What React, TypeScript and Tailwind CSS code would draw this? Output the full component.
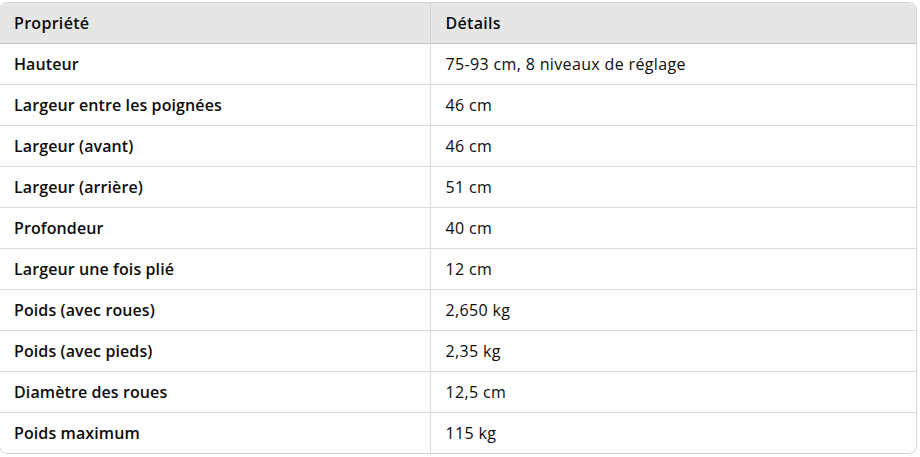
import React from "react";

const rows: [string, string][] = [
  ["Hauteur", "75-93 cm, 8 niveaux de réglage"],
  ["Largeur entre les poignées", "46 cm"],
  ["Largeur (avant)", "46 cm"],
  ["Largeur (arrière)", "51 cm"],
  ["Profondeur", "40 cm"],
  ["Largeur une fois plié", "12 cm"],
  ["Poids (avec roues)", "2,650 kg"],
  ["Poids (avec pieds)", "2,35 kg"],
  ["Diamètre des roues", "12,5 cm"],
  ["Poids maximum", "115 kg"],
];

const App: React.FC = () => {
  return (
    <div
      className="w-[920px] h-[457px] bg-white pt-[2px] text-[#0d0d0d]"
      style={{ fontFamily: '"Open Sans", "Noto Sans", sans-serif' }}
    >
      <div className="ml-[-1px] w-[918px] border border-[#d4d4d4] rounded-lg overflow-hidden">
        <table className="w-full border-collapse text-[16px] tracking-[0.3px]">
          <thead>
            <tr className="bg-[#e6e6e6] h-[40px] border-b border-[#c4c4c4]">
              <th className="w-[430px] text-left font-semibold pl-[14px] border-r border-[#d4d4d4]">
                Propriété
              </th>
              <th className="text-left font-semibold pl-[15px]">Détails</th>
            </tr>
          </thead>
          <tbody>
            {rows.map(([k, v], i) => (
              <tr
                key={k}
                className={`h-[41px] ${i < rows.length - 1 ? "border-b border-[#dcdcdc]" : ""}`}
              >
                <td className="pl-[14px] font-semibold tracking-[0.1px] border-r border-[#dcdcdc]">{k}</td>
                <td className="pl-[15px] tracking-[0.35px]">{v}</td>
              </tr>
            ))}
          </tbody>
        </table>
      </div>
    </div>
  );
};

export default App;
